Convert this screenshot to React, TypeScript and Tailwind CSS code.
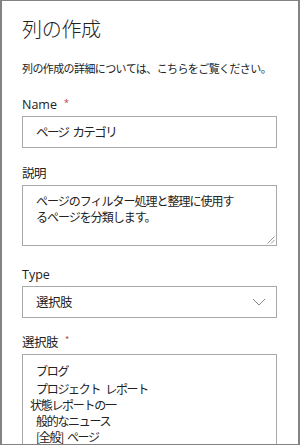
import React from "react";

const jp = { fontFamily: '"Noto Sans CJK JP", "Noto Sans", sans-serif' };
const lat = { fontFamily: '"Open Sans", "Noto Sans CJK JP", sans-serif' };

function Star() {
  return <span className="ml-[7px] text-[9px] leading-none text-[#c0393f] self-start mt-[1px]">*</span>;
}

function Sp({ w = 5 }: { w?: number }) {
  return <span className="inline-block" style={{ width: w }} />;
}

export default function App() {
  return (
    <div className="w-[300px] h-[445px] overflow-hidden bg-white border-x-2 border-y border-[#838383] text-[#222]" style={jp}>
      <div className="pl-[20px] pr-[21px]">
        <div className="pt-[15px] h-[47px] text-[20px] leading-[26px] font-light tracking-[-0.3px] text-[#222]">列の作成</div>
        <div className="h-[14px] text-[11px] leading-[14px] tracking-[-0.6px] mt-[13px] whitespace-nowrap">
          列の作成の詳細については、こちらをご覧ください。
        </div>
        <div className="mt-[22px] flex items-center h-[16px] text-[12.5px] leading-[16px]" style={lat}>
          <span>Name</span>
          <Star />
        </div>
        <div className="mt-[3px] h-[32px] border border-[#a9a9a9] flex items-center pl-[13px] text-[12.5px] tracking-[-1.6px] whitespace-nowrap">
          <span>ページ</span>
          <Sp w={4} />
          <span>カテゴリ</span>
        </div>
        <div className="mt-[17px] h-[16px] text-[12.5px] leading-[16px] tracking-[-0.5px]">説明</div>
        <div className="relative mt-[4px] h-[61px] border border-[#a9a9a9] pl-[13px] pt-[7px] text-[12px] leading-[16px] tracking-[-1px] whitespace-nowrap">
          <div>ページのフィルター処理と整理に使用す</div>
          <div>るページを分類します。</div>
          <svg className="absolute right-[1px] bottom-[1px]" width="9" height="9" viewBox="0 0 9 9">
            <line x1="8.5" y1="1.5" x2="1.5" y2="8.5" stroke="#9a9a9a" strokeWidth="1" />
            <line x1="8.5" y1="5" x2="5" y2="8.5" stroke="#9a9a9a" strokeWidth="1" />
          </svg>
        </div>
        <div className="mt-[21px] h-[16px] text-[12.5px] leading-[16px]" style={lat}>Type</div>
        <div className="mt-[3px] h-[32px] border border-[#a9a9a9] flex items-center justify-between pl-[13px] pr-[10px] text-[12.5px] tracking-[-0.5px]">
          <span>選択肢</span>
          <svg width="14" height="8" viewBox="0 0 14 8">
            <polyline points="1,1 7,7 13,1" fill="none" stroke="#8a8a8a" strokeWidth="1" />
          </svg>
        </div>
        <div className="mt-[16px] flex items-center h-[16px] text-[12.5px] leading-[16px] tracking-[-0.5px]">
          <span>選択肢</span>
          <Star />
        </div>
        <div className="mt-[4px] h-[120px] border border-[#a9a9a9] pl-[13px] pt-[8px] text-[12px] leading-[16px] tracking-[-1.3px] whitespace-nowrap">
          <div>ブログ</div>
          <div className="mt-[2px]">
            <span>プロジェクト</span>
            <Sp w={5} />
            <span>レポート</span>
          </div>
          <div className="-ml-[6px]">状態レポートの一</div>
          <div>般的なニュース</div>
          <div>
            <span>[全般]</span>
            <Sp w={4} />
            <span>ページ</span>
          </div>
        </div>
      </div>
    </div>
  );
}
